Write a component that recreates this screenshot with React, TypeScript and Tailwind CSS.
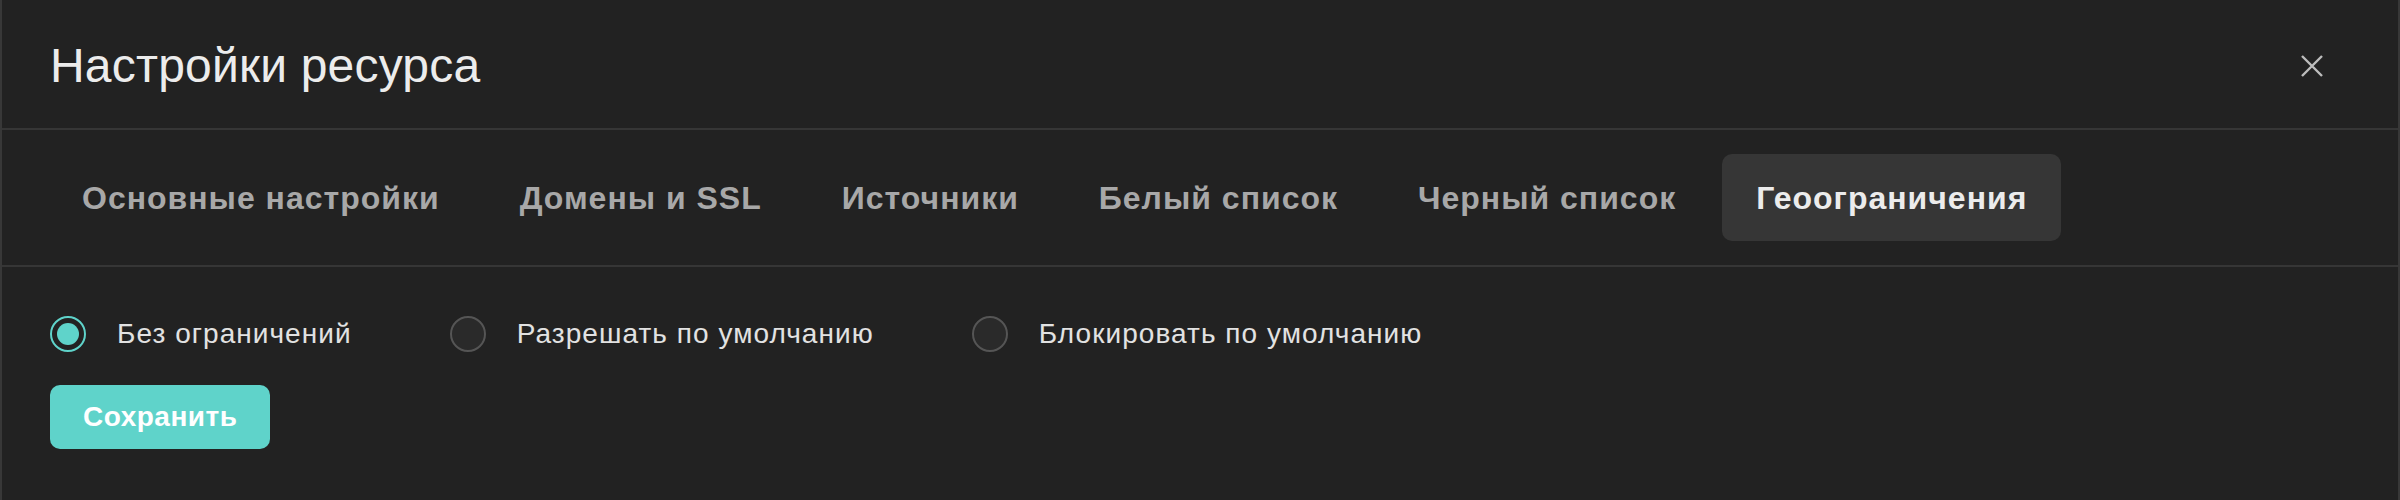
import { useState } from 'react';

const tabs = [
  'Основные настройки',
  'Домены и SSL',
  'Источники',
  'Белый список',
  'Черный список',
  'Геоограничения',
];

const modes = [
  { id: 'none', label: 'Без ограничений' },
  { id: 'allow', label: 'Разрешать по умолчанию' },
  { id: 'block', label: 'Блокировать по умолчанию' },
];

const App = () => {
  const [activeTab, setActiveTab] = useState('Геоограничения');
  const [mode, setMode] = useState('none');

  return (
    <div className="w-full h-[500px] bg-[#222222] border-x-2 border-[#383838] font-['Liberation_Sans',Arial,sans-serif]">
      {/* Header */}
      <div className="h-[130px] flex items-center justify-between pl-[48px] pr-[75px] pt-1 border-b-2 border-[#363636]">
        <h1 className="text-[48px] font-normal text-[#ececec] leading-none tracking-[0.2px]">Настройки ресурса</h1>
        <button className="w-[22px] h-[22px] text-[#bdbdbd]">
          <svg viewBox="0 0 22 22" width="22" height="22" fill="none" stroke="currentColor" strokeWidth="2.4">
            <path d="M1 1L21 21M21 1L1 21" />
          </svg>
        </button>
      </div>

      {/* Tabs */}
      <div className="flex items-center gap-3 pl-[46px] py-6 border-b-2 border-[#363636]">
        {tabs.map((tab) => (
          <button
            key={tab}
            onClick={() => setActiveTab(tab)}
            className={
              tab === activeTab
                ? 'h-[87px] px-[34px] rounded-[10px] bg-[#363636] text-[#ececec] text-[32px] font-bold tracking-[1px]'
                : 'h-[87px] px-[34px] rounded-[10px] text-[#a8a8a8] text-[32px] font-bold tracking-[1px]'
            }
          >
            {tab}
          </button>
        ))}
      </div>

      {/* Content */}
      <div className="pl-[48px] pt-[49px]">
        <div className="flex items-center gap-[98px]">
          {modes.map((m) => (
            <label key={m.id} className="flex items-center gap-[31px] cursor-pointer" onClick={() => setMode(m.id)}>
              {mode === m.id ? (
                <span className="w-9 h-9 rounded-full border-2 border-[#5fd3ca] flex items-center justify-center">
                  <span className="w-[22px] h-[22px] rounded-full bg-[#5fd3ca]" />
                </span>
              ) : (
                <span className="w-9 h-9 rounded-full border-2 border-[#555555] bg-[#2a2a2a]" />
              )}
              <span className="text-[28px] text-[#e2e2e2] leading-none tracking-[1.05px]">{m.label}</span>
            </label>
          ))}
        </div>
        <button className="mt-[33px] h-16 px-[33px] rounded-[10px] bg-[#5fd3ca] text-white text-[28px] font-bold tracking-[0.5px]">
          Сохранить
        </button>
      </div>
    </div>
  );
};

export default App;
